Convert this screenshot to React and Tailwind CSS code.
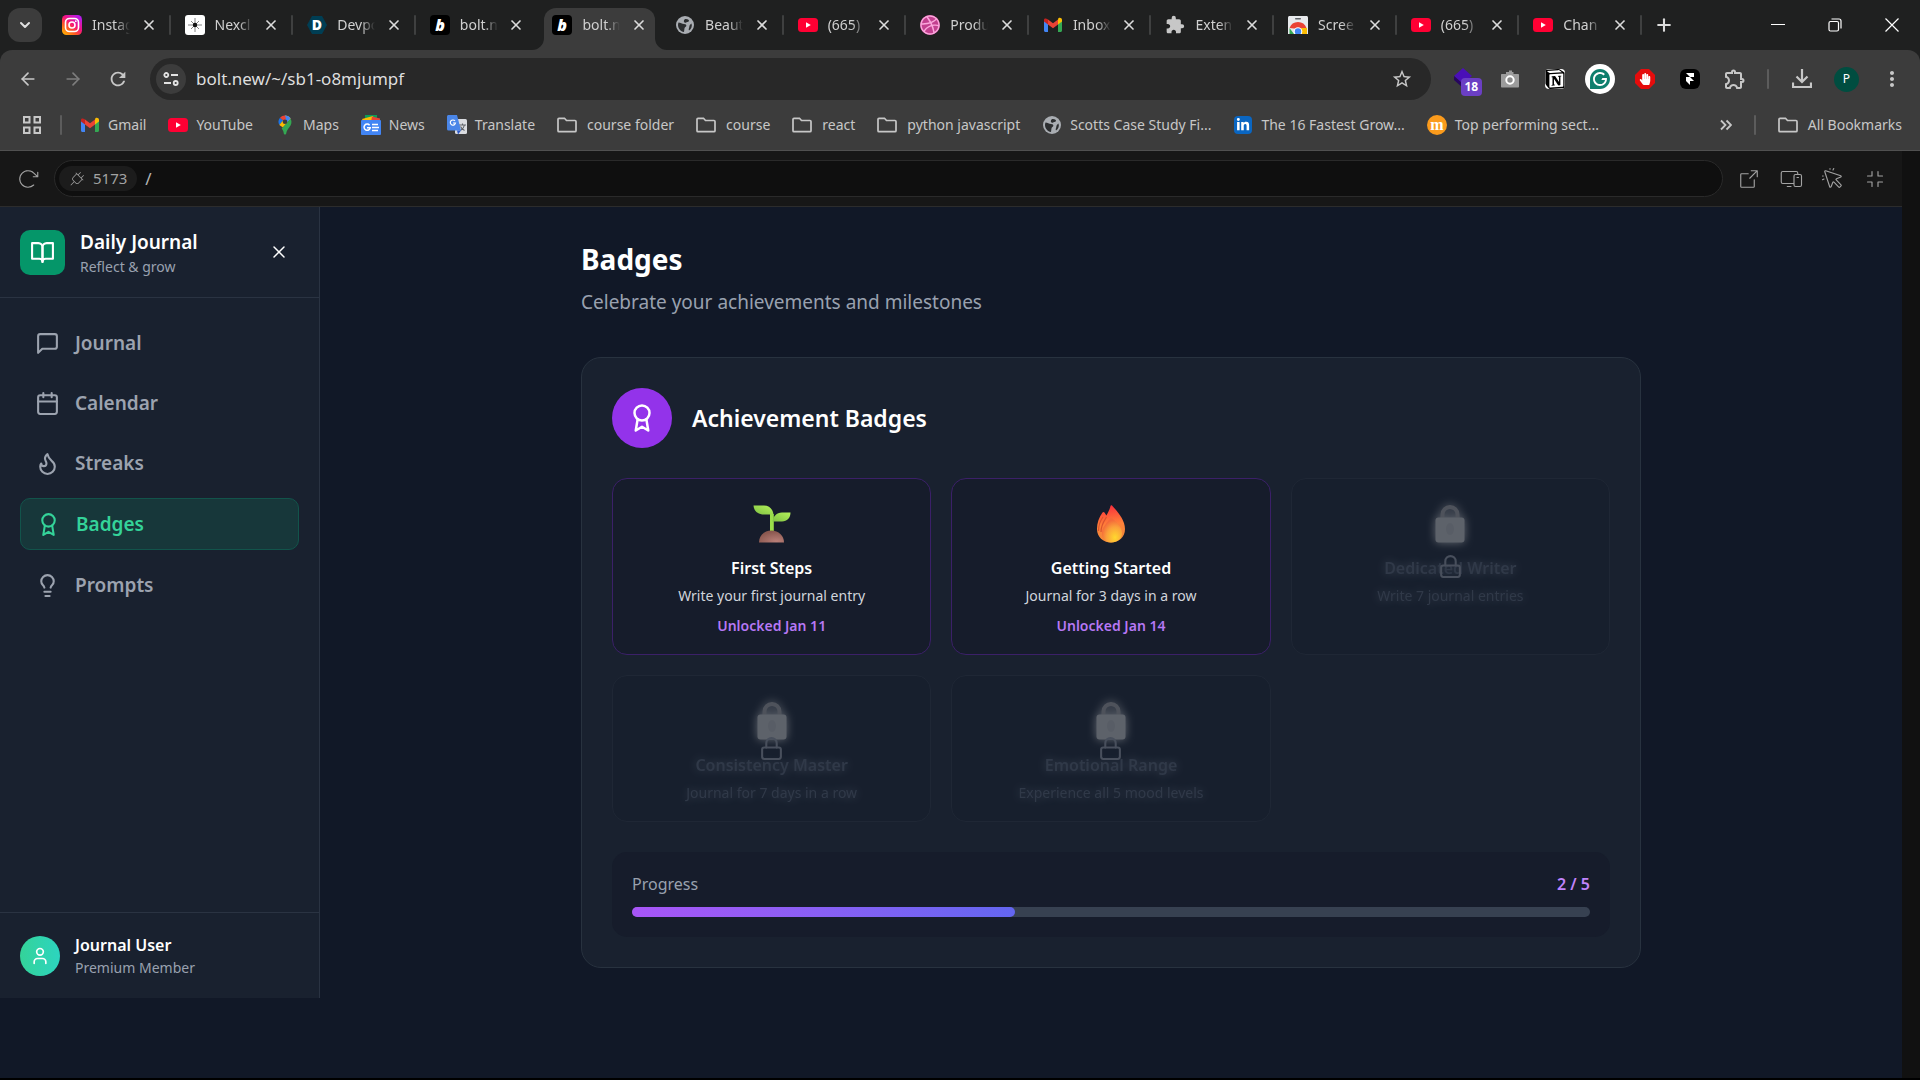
import { useState } from "react";
import { ChevronDown, Plus, X, ArrowLeft, ArrowRight } from "lucide-react";
import {
  PiArrowClockwiseLight,
  PiPlugLight,
  PiArrowSquareOutLight,
  PiDevicesLight,
  PiCursorClickLight,
  PiCornersInLight,
} from "react-icons/pi";
import { MdRefresh, MdStarBorder, MdMoreVert, MdExtension, MdOutlineExtension, MdPublic } from "react-icons/md";
import { SiGrammarly, SiNotion, SiFramer } from "react-icons/si";
import { FaDribbble, FaLinkedinIn, FaHandPaper } from "react-icons/fa";

/* ---------- favicons ---------- */

function YouTubeIcon() {
  return (
    <svg viewBox="0 0 20 20" className="size-5" aria-hidden>
      <rect y="3" width="20" height="14" rx="3.5" fill="#ff0033" />
      <path d="M8 7.2v5.6l4.8-2.8z" fill="#fff" />
    </svg>
  );
}

function GmailIcon() {
  return (
    <svg viewBox="0 0 20 20" className="size-5" aria-hidden>
      <path d="M1 5v10.5c0 .8.6 1.5 1.5 1.5H5V8.5z" fill="#4285f4" />
      <path d="M15 8.5V17h2.5c.9 0 1.5-.7 1.5-1.5V5z" fill="#34a853" />
      <path d="M15 4.5v5l4-3V5c0-1.900-2.100-2.900-3.600-1.800z" fill="#fbbc04" />
      <path d="M5 9.5v-5l5 3.800 5-3.800v5l-5 3.800z" fill="#ea4335" />
      <path d="M1 5v1.5l4 3v-5l-.4-.3C3.100 3.100 1 3.100 1 5z" fill="#c5221f" />
    </svg>
  );
}

function InstagramIcon() {
  return (
    <svg viewBox="0 0 20 20" className="size-5" aria-hidden>
      <defs>
        <linearGradient id="ig" x1="0" y1="1" x2="0.8" y2="0">
          <stop offset="0" stopColor="#ffc800" />
          <stop offset="0.35" stopColor="#ff5a1f" />
          <stop offset="0.6" stopColor="#f5147d" />
          <stop offset="1" stopColor="#b41bf0" />
        </linearGradient>
      </defs>
      <rect width="20" height="20" rx="4.5" fill="url(#ig)" />
      <rect x="3.5" y="3.5" width="13" height="13" rx="4" fill="none" stroke="#fff" strokeWidth="1.6" />
      <circle cx="10" cy="10" r="3" fill="none" stroke="#fff" strokeWidth="1.6" />
      <circle cx="13.8" cy="6.2" r="0.9" fill="#fff" />
    </svg>
  );
}

function NexIcon() {
  return (
    <svg viewBox="0 0 20 20" className="size-5" aria-hidden>
      <rect width="20" height="20" rx="3" fill="#fff" />
      <path d="M10 3v14M3 10h14M6 6l8 8M14 6l-8 8" stroke="#777" strokeWidth="0.9" />
      <circle cx="10" cy="10" r="2.2" fill="#111" />
    </svg>
  );
}

function DevpostIcon() {
  return (
    <svg viewBox="0 0 20 20" className="size-5" aria-hidden>
      <path d="M5 1h10l5 9-5 9H5L0 10z" fill="#003e54" />
      <text x="10" y="15" textAnchor="middle" fontSize="14" fontWeight="800" fill="#fff" fontFamily="Open Sans, sans-serif">D</text>
    </svg>
  );
}

function BoltIcon() {
  return (
    <svg viewBox="0 0 20 20" className="size-5" aria-hidden>
      <rect width="20" height="20" rx="4" fill="#000" />
      <text x="10" y="15.5" textAnchor="middle" fontSize="16" fontWeight="800" fontStyle="italic" fill="#fff" fontFamily="Open Sans, sans-serif">b</text>
    </svg>
  );
}

function GlobeIcon() {
  return (
    <svg viewBox="0 0 20 20" className="size-5" aria-hidden>
      <circle cx="10" cy="10" r="9" fill="#a9adb2" />
      <path d="M3.5 7.5c2 .2 3.500 1.500 5.500 1.500 1.800 0 2.500.8 2.300 2-.2 1-1.600 1-1.800 2.200L9 17c-3.500-.6-6-3.500-6-7 0-.9.200-1.700.5-2.500zM9.500 4.500c1-.8 3-.5 4.300.6.5 1.200-.4 2-1.600 1.900-1 0-1.200 1-2.200.8-1.300-.3-1.600-2.300-.5-3.300z" fill="#2c2e30" />
      <path d="M16.500 8.500c1 2.500-.2 5.500-2.500 7-.8-1.300.2-2.300.3-3.500 0-1.400.8-2.700 2.200-3.500z" fill="#2c2e30" />
    </svg>
  );
}

function DribbbleIcon() {
  return (
    <span className="flex size-5 items-center justify-center rounded-full bg-[#c2408f]">
      <FaDribbble className="size-5 text-[#fba6dc]" aria-hidden />
    </span>
  );
}

function WebStoreIcon() {
  return (
    <svg viewBox="0 0 20 20" className="size-5" aria-hidden>
      <path d="M0 2.5C0 1.700.7 1 1.5 1h17c.8 0 1.5.7 1.5 1.5V19H0z" fill="#e8eaed" />
      <rect x="7" y="3" width="6" height="1.5" rx="0.7" fill="#5f6368" />
      <path d="M1.500 13A9 9 0 0 1 18.500 13L19 14H10z" fill="#ea4335" />
      <path d="M1.500 19v-6l4.500 6z" fill="#34a853" />
      <path d="M13 13h6v6h-5z" fill="#fbbc04" />
      <circle cx="10" cy="16.5" r="4.3" fill="#fff" />
      <circle cx="10" cy="16.5" r="3.2" fill="#4285f4" />
      <rect y="19" width="20" height="2" fill="#1f2020" />
    </svg>
  );
}

function MapsIcon() {
  return (
    <svg viewBox="0 0 20 20" className="size-5" aria-hidden>
      <path d="M5 2.800A6.500 6.500 0 0 0 4.300 10L8.300 5.600z" fill="#1a73e8" />
      <path d="M10 .5c2.500 0 4.500 1.200 5.700 3.200L8 12.500 4.300 10 8 5.500z" fill="#fbbc04" />
      <path d="M10 .5c2.500 0 4.500 1.200 5.500 3L12 7.500 8.300 5.600z" fill="#4285f4" />
      <path d="M5 2.800A6.500 6.500 0 0 1 10 .5L11 4 8.300 5.600z" fill="#ea4335" />
      <path d="M15.600 3.700c1.700 3.300.7 6-1.100 8.300-2 2.500-2.800 4-3.300 6.500-.2 1.300-2.200 1.300-2.400 0-.3-2-.9-3.500-2.100-5z" fill="#34a853" />
      <circle cx="10" cy="6.8" r="2.3" fill="#3c3c3c" />
    </svg>
  );
}

function NewsIcon() {
  return (
    <svg viewBox="0 0 20 20" className="size-5" aria-hidden>
      <path d="M4 0h12v6H4z" fill="#0c9d58" />
      <path d="M1 4l11-3 1.500 5H2z" fill="#fbbc04" />
      <path d="M11 1.500l8 2V7h-9z" fill="#ea4335" />
      <rect y="5" width="20" height="15" rx="1" fill="#4285f4" />
      <path d="M11 9.500h6M11 12.500h7M11 15.500h6" stroke="#fff" strokeWidth="1.5" />
      <path d="M8.600 10.300A3.100 3.100 0 1 0 9.200 12.800H6" stroke="#fff" strokeWidth="1.5" fill="none" />
    </svg>
  );
}

function TranslateIcon() {
  return (
    <svg viewBox="0 0 20 20" className="size-5" aria-hidden>
      <rect x="8" y="4" width="12" height="15" rx="1.5" fill="#dadce0" />
      <path d="M12 10h7M15.500 8.500V10M17.500 10c-.5 2.500-2.500 4.500-4 5.500M13.500 11.500c1 1.800 2.500 3.200 4 4" stroke="#5f6368" strokeWidth="1.1" fill="none" />
      <path d="M1.500 0H10l4 15.500H1.500A1.500 1.500 0 0 1 0 14V1.500C0 .7.7 0 1.500 0z" fill="#4a86e8" />
      <path d="M10 15.500h4l-3 4z" fill="#2a56c6" />
      <path d="M8 6A2.600 2.600 0 1 0 8.500 8H6" stroke="#fff" strokeWidth="1.2" fill="none" />
    </svg>
  );
}

function FolderIcon() {
  return (
    <svg viewBox="0 0 20 20" className="mr-0.5 size-5" fill="none" stroke="#c7c7c7" strokeWidth="1.7" aria-hidden>
      <path d="M1 4.300c0-.6.4-1 1-1h5.500l2 2.200H18c.6 0 1 .4 1 1v9.200c0 .6-.4 1-1 1H2c-.6 0-1-.4-1-1z" />
    </svg>
  );
}

function LinkedInIcon() {
  return (
    <span className="flex size-5 items-center justify-center">
      <span className="flex size-[18px] items-center justify-center rounded-sm bg-[#0a66c2]">
        <FaLinkedinIn className="size-3.5 text-white" aria-hidden />
      </span>
    </span>
  );
}

function MIcon() {
  return (
    <svg viewBox="0 0 20 20" className="size-5" aria-hidden>
      <circle cx="10" cy="10" r="10" fill="#fb9b1c" />
      <text x="10" y="14.5" textAnchor="middle" fontSize="16" fontWeight="700" fill="#fff" fontFamily="Liberation Serif, serif">m</text>
    </svg>
  );
}

/* ---------- app icons ---------- */

function Stroke({ className, children }) {
  return (
    <svg
      viewBox="0 0 24 24"
      className={className}
      fill="none"
      stroke="currentColor"
      strokeWidth="2"
      strokeLinecap="round"
      strokeLinejoin="round"
      aria-hidden
    >
      {children}
    </svg>
  );
}

const BookOpen = ({ className }) => (
  <Stroke className={className}>
    <path d="M2 3h6a4 4 0 0 1 4 4v14a3 3 0 0 0-3-3H2z" />
    <path d="M22 3h-6a4 4 0 0 0-4 4v14a3 3 0 0 1 3-3h7z" />
  </Stroke>
);

const Message = ({ className }) => (
  <Stroke className={className}>
    <path d="M21 15a2 2 0 0 1-2 2H7l-4 4V5a2 2 0 0 1 2-2h14a2 2 0 0 1 2 2z" />
  </Stroke>
);

const Calendar = ({ className }) => (
  <Stroke className={className}>
    <path d="M8 2v4M16 2v4M3 10h18" />
    <rect x="3" y="4" width="18" height="18" rx="2" />
  </Stroke>
);

const Flame = ({ className }) => (
  <Stroke className={className}>
    <path d="M8.5 14.5A2.500 2.500 0 0 0 11 12c0-1.380-.5-2-1-3-1.072-2.143-.224-4.054 2-6 .5 2.500 2 4.900 4 6.500 2 1.600 3 3.500 3 5.500a7 7 0 1 1-14 0c0-1.153.433-2.294 1-3a2.500 2.500 0 0 0 2.500 2.500z" />
  </Stroke>
);

const Award = ({ className }) => (
  <Stroke className={className}>
    <circle cx="12" cy="8" r="6" />
    <path d="M15.477 12.890 17 22l-5-3-5 3 1.523-9.110" />
  </Stroke>
);

const Lightbulb = ({ className }) => (
  <Stroke className={className}>
    <path d="M15 14c.2-1 .7-1.700 1.500-2.500 1-.9 1.500-2.200 1.500-3.500A6 6 0 0 0 6 8c0 1 .2 2.200 1.500 3.500.7.7 1.300 1.500 1.500 2.500" />
    <path d="M9 18h6M10 22h4" />
  </Stroke>
);

const User = ({ className }) => (
  <Stroke className={className}>
    <path d="M19 21v-2a4 4 0 0 0-4-4H9a4 4 0 0 0-4 4v2" />
    <circle cx="12" cy="7" r="4" />
  </Stroke>
);

const Lock = ({ className }) => (
  <Stroke className={className}>
    <rect x="3" y="11" width="18" height="11" rx="2" />
    <path d="M7 11V7a5 5 0 0 1 10 0v4" />
  </Stroke>
);

function Seedling() {
  return (
    <svg viewBox="0 0 38 38" className="size-[38px]" aria-hidden>
      <defs>
        <radialGradient id="soil" cx="0.7" cy="0.9" r="0.8">
          <stop offset="0" stopColor="#b97f78" />
          <stop offset="1" stopColor="#8b5850" />
        </radialGradient>
        <linearGradient id="leaf" x1="0" y1="1" x2="1" y2="0">
          <stop offset="0" stopColor="#7fc043" />
          <stop offset="1" stopColor="#b4f25a" />
        </linearGradient>
      </defs>
      <path d="M17 9h3.800v18H17z" fill="#9ade4a" />
      <path d="M.5.500h10.500c6 0 9 4.500 9.500 9H11C5 9.500 1 6.500.5.500z" fill="url(#leaf)" />
      <path d="M37.500 7.500h-8.500c-5.500 0-9 4-9.500 9H29c5 0 8.500-3.500 8.500-9z" fill="url(#leaf)" />
      <path d="M6 37.500c0-7 5.500-12 12.500-12S31 30.500 31 37.500z" fill="url(#soil)" />
    </svg>
  );
}

function Fire() {
  return (
    <svg viewBox="0 0 38 38" className="size-[38px]" aria-hidden>
      <defs>
        <linearGradient id="fireOuter" x1="0.5" y1="0" x2="0.6" y2="1">
          <stop offset="0" stopColor="#f92f3c" />
          <stop offset="0.5" stopColor="#ff8139" />
          <stop offset="1" stopColor="#ee8a3a" />
        </linearGradient>
        <radialGradient id="fireInner" cx="0.65" cy="0.8" r="0.7">
          <stop offset="0" stopColor="#ffd82e" />
          <stop offset="0.6" stopColor="#fba13b" />
          <stop offset="1" stopColor="#f4693a" />
        </radialGradient>
      </defs>
      <path d="M10.500 7.500c.8-1 1.800-.6 2.300.4l1.600 2.600C16.500 7 17.800 4 18.500 1c.2-.8 1-1 1.500-.4C26 7 33 15 33 24c0 8-6 13.500-14 13.500S5 32 5 24c0-6 2-12 5.500-16.500z" fill="url(#fireOuter)" />
      <path d="M6.500 26c0-6 1.500-10 4.500-14M9 27c0-7 3-11 5.500-15" stroke="#d9532f" strokeWidth="1.2" fill="none" />
      <path d="M19.500 12.500C24 17 30 21 30 28c0 6-5 9.500-11 9.500S10 34 10 28c0-6 5-10 8.500-15.300.3-.5.700-.5 1-.2z" fill="url(#fireInner)" />
    </svg>
  );
}

function Padlock() {
  return (
    <svg viewBox="0 0 38 38" className="size-[38px] overflow-visible drop-shadow-[0_0_5px_#d8d8d8]" aria-hidden>
      <path d="M11.500 14V9.500a7.500 7.500 0 0 1 15 0V14" fill="none" stroke="#a0a0a0" strokeWidth="4" />
      <rect x="4.5" y="12.5" width="29" height="25" rx="3" fill="#c6c6c6" />
      <ellipse cx="19" cy="24" rx="4" ry="6" fill="#a9a9a9" opacity="0.4" />
    </svg>
  );
}

/* ---------- data ---------- */

const tabs = [
  { title: "Instag", Icon: InstagramIcon },
  { title: "Nexcl", Icon: NexIcon },
  { title: "Devpo", Icon: DevpostIcon },
  { title: "bolt.n", Icon: BoltIcon },
  { title: "bolt.n", Icon: BoltIcon, active: true },
  { title: "Beaut", Icon: GlobeIcon },
  { title: "(665)", Icon: YouTubeIcon },
  { title: "Produ", Icon: DribbbleIcon },
  { title: "Inbox", Icon: GmailIcon },
  { title: "Exten", Icon: () => <MdExtension className="size-5 text-[#c7c7c7]" aria-hidden /> },
  { title: "Scree", Icon: WebStoreIcon },
  { title: "(665)", Icon: YouTubeIcon },
  { title: "Chan", Icon: YouTubeIcon },
];

const bookmarks = [
  { label: "Gmail", Icon: GmailIcon },
  { label: "YouTube", Icon: YouTubeIcon },
  { label: "Maps", Icon: MapsIcon },
  { label: "News", Icon: NewsIcon },
  { label: "Translate", Icon: TranslateIcon },
  { label: "course folder", Icon: FolderIcon },
  { label: "course", Icon: FolderIcon },
  { label: "react", Icon: FolderIcon },
  { label: "python javascript", Icon: FolderIcon },
  { label: "Scotts Case Study Fi...", Icon: GlobeIcon },
  { label: "The 16 Fastest Grow...", Icon: LinkedInIcon },
  { label: "Top performing sect...", Icon: MIcon },
];

const navItems = [
  { label: "Journal", Icon: Message },
  { label: "Calendar", Icon: Calendar },
  { label: "Streaks", Icon: Flame },
  { label: "Badges", Icon: Award },
  { label: "Prompts", Icon: Lightbulb },
];

const badges = [
  { name: "First Steps", description: "Write your first journal entry", unlocked: "Jan 11", Art: Seedling },
  { name: "Getting Started", description: "Journal for 3 days in a row", unlocked: "Jan 14", Art: Fire },
  { name: "Dedicated Writer", description: "Write 7 journal entries" },
  { name: "Consistency Master", description: "Journal for 7 days in a row" },
  { name: "Emotional Range", description: "Experience all 5 mood levels" },
];

/* ---------- browser chrome ---------- */

function Tab({ title, Icon, active, divider }) {
  return (
    <div className="relative flex h-full min-w-0 flex-1 items-end">
      {active && (
        <>
          <div className="absolute inset-x-1.5 top-2 bottom-0 rounded-t-xl bg-[#3c3c3c]" />
          <svg viewBox="0 0 12 12" className="absolute bottom-0 -left-1.5 size-3 fill-[#3c3c3c]" aria-hidden>
            <path d="M12 0v12H0A12 12 0 0 0 12 0z" />
          </svg>
          <svg viewBox="0 0 12 12" className="absolute -right-1.5 bottom-0 size-3 fill-[#3c3c3c]" aria-hidden>
            <path d="M0 0v12h12A12 12 0 0 1 0 0z" />
          </svg>
        </>
      )}
      <div className="relative flex h-full w-full items-center pr-3.5 pl-3.5">
        <Icon />
        <span className="ml-2.5 w-10 text-sm whitespace-nowrap text-[#d0d0d0] [mask-image:linear-gradient(to_right,black_60%,transparent_95%)]">
          {title}
        </span>
        <button type="button" aria-label="Close tab" className="ml-auto text-[#dcdcdc]">
          <X className="size-4" strokeWidth={2.5} />
        </button>
      </div>
      {divider && <div className="absolute top-[15px] right-0 h-5 w-0.5 rounded bg-[#3f4040]" />}
    </div>
  );
}

function TabStrip() {
  return (
    <div className="flex h-[50px] items-center bg-[#1f2020]">
      <div className="flex w-12 shrink-0 justify-center pl-0.5">
        <button type="button" aria-label="Search tabs" className="flex size-[34px] items-center justify-center rounded-xl bg-[#3c3c3c] text-[#e0e0e0]">
          <ChevronDown className="size-4" strokeWidth={3} />
        </button>
      </div>
      <div className="flex h-full min-w-0 flex-1">
        {tabs.map((tab, i) => (
          <Tab key={i} {...tab} divider={!tab.active && !tabs[i + 1]?.active} />
        ))}
      </div>
      <div className="flex h-full w-[278px] shrink-0 items-center">
        <button type="button" aria-label="New tab" className="ml-3 text-[#dcdcdc]">
          <Plus className="size-5" strokeWidth={2.5} />
        </button>
        <div className="ml-auto flex">
          <button type="button" aria-label="Minimize" className="flex w-[57px] justify-center">
            <svg viewBox="0 0 14 14" className="size-3.5" stroke="#fff" aria-hidden>
              <path d="M0 6.500h14" />
            </svg>
          </button>
          <button type="button" aria-label="Restore" className="flex w-[57px] justify-center">
            <svg viewBox="0 0 14 14" className="size-3.5" stroke="#fff" fill="none" strokeWidth="1.2" aria-hidden>
              <rect x="1" y="3.5" width="9.5" height="9.5" rx="1.5" />
              <path d="M3.500 1h7.500a2 2 0 0 1 2 2v7.500" />
            </svg>
          </button>
          <button type="button" aria-label="Close" className="flex w-[57px] justify-center">
            <svg viewBox="0 0 14 14" className="size-3.5" stroke="#fff" strokeWidth="1.2" aria-hidden>
              <path d="M.5.500l13 13M13.500.500l-13 13" />
            </svg>
          </button>
        </div>
      </div>
    </div>
  );
}

function ToolButton({ label, children }) {
  return (
    <button type="button" aria-label={label} className="flex h-10 w-[45px] shrink-0 items-center justify-center text-[#c7c7c7]">
      {children}
    </button>
  );
}

function AddressBar() {
  return (
    <div className="flex h-[58px] items-center rounded-t-xl bg-[#3c3c3c] pr-1.5 pl-[5px]">
      <ToolButton label="Back">
        <ArrowLeft className="size-5" />
      </ToolButton>
      <ToolButton label="Forward">
        <ArrowRight className="size-5 text-[#7d7d7d]" />
      </ToolButton>
      <ToolButton label="Reload">
        <MdRefresh className="size-[22px]" />
      </ToolButton>
      <div className="ml-2.5 flex h-[42px] min-w-0 flex-1 items-center rounded-full bg-[#282828] pr-[18px] pl-1.5">
        <button type="button" aria-label="Site information" className="flex size-[30px] shrink-0 items-center justify-center rounded-full bg-[#3c3c3c]">
          <svg viewBox="0 0 16 16" className="size-4" fill="none" stroke="#e3e3e3" strokeWidth="1.8" aria-hidden>
            <circle cx="3.3" cy="4" r="2" />
            <path d="M8 4h7M1 12h7" />
            <circle cx="12.7" cy="12" r="2" />
          </svg>
        </button>
        <input
          aria-label="Address"
          defaultValue="bolt.new/~/sb1-o8mjumpf"
          className="ml-2.5 min-w-0 flex-1 bg-transparent text-[17px] text-[#dedede] outline-none"
        />
        <MdStarBorder className="size-[22px] text-[#c7c7c7]" aria-hidden />
      </div>
      <div className="ml-[11px] flex shrink-0 items-center">
        <ToolButton label="Extension, 18 items">
          <span className="relative">
            <svg viewBox="0 0 24 24" className="size-6" aria-hidden>
              <path d="M10 1l9 8-9 8-9-8z" fill="#4a0fb8" />
              <path d="M1 9v4l9 8v-4z" fill="#27065f" />
            </svg>
            <span className="absolute top-[11px] left-2 rounded bg-[#6b3fc4] px-1 text-xs leading-[18px] font-bold text-white">18</span>
          </span>
        </ToolButton>
        <ToolButton label="Screenshot">
          <svg viewBox="0 0 20 20" className="size-5" aria-hidden>
            <path d="M6 5V3h3V1.500h3V3h1.500v2H18c.6 0 1 .4 1 1v11.500c0 .6-.4 1-1 1H2c-.6 0-1-.4-1-1V6c0-.6.4-1 1-1z" fill="#9c9c9c" />
            <circle cx="10" cy="11" r="3.7" fill="#8a8a8a" stroke="#fff" strokeWidth="2" />
          </svg>
        </ToolButton>
        <ToolButton label="Notion">
          <span className="flex size-5 items-center justify-center rounded bg-white">
            <SiNotion className="size-5 text-black" />
          </span>
        </ToolButton>
        <ToolButton label="Grammarly">
          <span className="flex size-[30px] items-center justify-center rounded-full bg-white">
            <SiGrammarly className="size-5 text-[#0e7f6d]" />
          </span>
        </ToolButton>
        <ToolButton label="AdBlock">
          <svg viewBox="0 0 20 20" className="size-5" aria-hidden>
            <path d="M6 0h8l6 6v8l-6 6H6l-6-6V6z" fill="#e50c0c" />
            <FaHandPaper x="4" y="4" size={12} color="#fff" />
          </svg>
        </ToolButton>
        <ToolButton label="Framer">
          <span className="flex size-5 items-center justify-center rounded-md bg-black">
            <SiFramer className="size-3 text-white" />
          </span>
        </ToolButton>
        <ToolButton label="Extensions">
          <MdOutlineExtension className="size-6" />
        </ToolButton>
        <div className="mx-2.5 h-5 w-0.5 rounded bg-[#5c5c5c]" />
        <ToolButton label="Downloads">
          <svg viewBox="0 0 20 20" className="size-5" fill="none" stroke="currentColor" strokeWidth="2.2" aria-hidden>
            <path d="M10 0v12M4.500 7.500 10 13l5.500-5.500M1 13.500V18h18v-4.500" />
          </svg>
        </ToolButton>
        <ToolButton label="Profile">
          <span className="flex size-[25px] items-center justify-center rounded-full bg-[#004d40] text-xs text-white">P</span>
        </ToolButton>
        <ToolButton label="Menu">
          <MdMoreVert className="size-6" />
        </ToolButton>
      </div>
    </div>
  );
}

function BookmarksBar() {
  return (
    <div className="flex h-[43px] items-center border-b border-[#505050] bg-[#3c3c3c] pr-[18px] pb-2 pl-[22px] text-sm whitespace-nowrap text-[#c7c7c7]">
      <button type="button" aria-label="Apps">
        <svg viewBox="0 0 20 20" className="size-5" fill="none" stroke="#c7c7c7" strokeWidth="2" aria-hidden>
          <rect x="2" y="2" width="5.5" height="5.5" />
          <rect x="12.5" y="2" width="5.5" height="5.5" />
          <rect x="2" y="12.5" width="5.5" height="5.5" />
          <rect x="12.5" y="12.5" width="5.5" height="5.5" />
        </svg>
      </button>
      <div className="mx-[18px] h-5 w-0.5 rounded bg-[#5c5c5c]" />
      <nav className="flex min-w-0 flex-1 gap-[22px] overflow-hidden">
        {bookmarks.map(({ label, Icon }) => (
          <a key={label} href="#" className="flex shrink-0 items-center gap-2">
            <Icon />
            {label}
          </a>
        ))}
      </nav>
      <button type="button" aria-label="More bookmarks">
        <svg viewBox="0 0 12 12" className="size-3" fill="none" stroke="#c7c7c7" strokeWidth="1.8" aria-hidden>
          <path d="M1 1.500 5.500 6 1 10.500M6.500 1.500 11 6l-4.500 4.500" />
        </svg>
      </button>
      <div className="mx-[22px] h-5 w-0.5 rounded bg-[#5c5c5c]" />
      <a href="#" className="flex items-center gap-2">
        <FolderIcon />
        All Bookmarks
      </a>
    </div>
  );
}

function PreviewBar() {
  return (
    <div className="flex h-14 items-center border-b border-[#2c2c2c] bg-[#171717] pr-[15px] pl-4 text-[#a3a3a3]">
      <button type="button" aria-label="Reload preview">
        <PiArrowClockwiseLight className="size-6" />
      </button>
      <div className="ml-3.5 flex h-[37px] min-w-0 flex-1 items-center rounded-full border border-[#2a2a2a] bg-[#0f0f0f] px-1">
        <button type="button" className="flex h-[25px] items-center gap-2 rounded-full bg-[#1c1c1c] px-2.5 text-[15px] text-[#a3a3a3]">
          <PiPlugLight className="size-4" />
          5173
        </button>
        <input aria-label="Path" defaultValue="/" className="ml-2 min-w-0 flex-1 bg-transparent text-[17px] text-[#b5b5b5] outline-none" />
      </div>
      <div className="ml-3.5 flex gap-[18px]">
        <button type="button" aria-label="Open in new tab"><PiArrowSquareOutLight className="size-6" /></button>
        <button type="button" aria-label="Device preview"><PiDevicesLight className="size-6" /></button>
        <button type="button" aria-label="Select element"><PiCursorClickLight className="size-6" /></button>
        <button type="button" aria-label="Exit full screen"><PiCornersInLight className="size-6" /></button>
      </div>
    </div>
  );
}

/* ---------- journal app ---------- */

function Sidebar({ current, onSelect }) {
  return (
    <aside className="flex min-h-[calc(100vh-289px)] w-80 shrink-0 flex-col self-start border-r border-[#2a3342] bg-[#19212f]">
      <div className="flex items-center border-b border-[#2a3342] p-5">
        <div className="flex size-[45px] items-center justify-center rounded-[10px] bg-[#059669] text-white">
          <BookOpen className="size-[25px]" />
        </div>
        <div className="ml-[15px]">
          <h1 className="text-[19px] leading-[30px] font-semibold text-white">Daily Journal</h1>
          <p className="text-sm leading-5 text-gray-400">Reflect &amp; grow</p>
        </div>
        <button type="button" aria-label="Close sidebar" className="mr-2.5 ml-auto text-white">
          <X className="size-5" strokeWidth={1.75} />
        </button>
      </div>

      <nav className="flex flex-1 flex-col gap-2.5 p-5">
        {navItems.map(({ label, Icon }) => (
          <button
            key={label}
            type="button"
            onClick={() => onSelect(label)}
            className={
              label === current
                ? "flex h-[52px] items-center gap-[15px] rounded-[10px] border border-[#12544b] bg-[#17373a] px-[15px] text-[19px] font-semibold text-[#34d399]"
                : "flex h-[50px] items-center gap-[15px] rounded-[10px] px-[15px] text-[19px] font-semibold text-[#9ca3af]"
            }
          >
            <Icon className="size-[25px]" />
            {label}
          </button>
        ))}
      </nav>

      <div className="flex items-center gap-[15px] border-t border-[#2a3342] p-5">
        <div className="flex size-10 items-center justify-center rounded-full bg-linear-to-r from-[#34d399] to-[#2dd4bf] text-white">
          <User className="size-5" />
        </div>
        <div>
          <p className="text-base leading-[25px] font-semibold text-white">Journal User</p>
          <p className="text-sm leading-5 text-gray-400">Premium Member</p>
        </div>
      </div>
    </aside>
  );
}

function BadgeCard({ name, description, unlocked, Art }) {
  if (!unlocked) {
    return (
      <div className="relative rounded-[15px] border border-[#1f2735] bg-[#171f2d] px-5 pt-[22px] pb-[18px] text-center">
        <div className="opacity-40">
          <div className="mb-2.5 flex h-[45px] items-center justify-center">
            <Padlock />
          </div>
          <h3 className="mb-[5px] text-base leading-[25px] font-semibold text-[#566072] [text-shadow:0_0_10px_#7b8494]">{name}</h3>
          <p className="text-sm leading-5 text-[#566072] [text-shadow:0_0_10px_#7b8494]">{description}</p>
        </div>
        <div className="absolute inset-0 flex items-center justify-center text-[#484f5c]">
          <Lock className="size-[25px]" />
        </div>
      </div>
    );
  }

  return (
    <div className="rounded-[15px] border border-[#3b2068] bg-[#161c2b] px-5 pt-[22px] pb-[18px] text-center">
      <div className="mb-2.5 flex h-[45px] items-center justify-center">
        <Art />
      </div>
      <h3 className="mb-[5px] text-base leading-[25px] font-semibold text-white">{name}</h3>
      <p className="text-sm leading-5 text-gray-300">{description}</p>
      <p className="mt-2.5 text-sm leading-5 font-semibold text-[#b678f5]">Unlocked {unlocked}</p>
    </div>
  );
}

function BadgesPage() {
  const earned = badges.filter((b) => b.unlocked).length;

  return (
    <main className="min-w-0 flex-1">
      <div className="mx-auto max-w-[1120px] p-[30px]">
        <h2 className="text-[28px] leading-[45px] font-bold text-white">Badges</h2>
        <p className="mt-[5px] text-[19px] leading-[30px] text-gray-400">Celebrate your achievements and milestones</p>

        <section className="mt-10 rounded-[20px] border border-[#28323f] bg-[#19212f] p-[30px]">
          <div className="flex items-center gap-5">
            <div className="flex size-[60px] items-center justify-center rounded-full bg-[#9333ea] text-white">
              <Award className="size-[30px]" />
            </div>
            <h3 className="text-[23px] font-semibold text-white">Achievement Badges</h3>
          </div>

          <div className="mt-[30px] grid grid-cols-3 gap-5">
            {badges.map((badge) => (
              <BadgeCard key={badge.name} {...badge} />
            ))}
          </div>

          <div className="mt-[30px] rounded-[15px] bg-[#161c2b] p-5">
            <div className="mb-2.5 flex items-center justify-between text-base leading-[25px]">
              <span className="text-gray-400">Progress</span>
              <span className="font-semibold text-[#c084fc]">
                {earned} / {badges.length}
              </span>
            </div>
            <div className="h-2.5 rounded-full bg-[#374151]">
              <div
                className="h-2.5 rounded-full bg-linear-to-r from-[#a855f7] to-[#6366f1]"
                style={{ width: `${(earned / badges.length) * 100}%` }}
              />
            </div>
          </div>
        </section>
      </div>
    </main>
  );
}

export default function App() {
  const [page, setPage] = useState("Badges");

  return (
    <div className="flex min-h-screen flex-col border-b-2 border-black bg-[#111827] font-['Noto_Sans','Open_Sans',sans-serif]">
      <header className="bg-[#1f2020]">
        <TabStrip />
        <AddressBar />
        <BookmarksBar />
      </header>
      <div className="flex flex-1">
        <div className="flex min-w-0 flex-1 flex-col">
          <PreviewBar />
          <div className="flex flex-1">
            <Sidebar current={page} onSelect={setPage} />
            <BadgesPage />
          </div>
        </div>
        <div className="w-[18px] shrink-0 bg-[#111111]" />
      </div>
    </div>
  );
}
